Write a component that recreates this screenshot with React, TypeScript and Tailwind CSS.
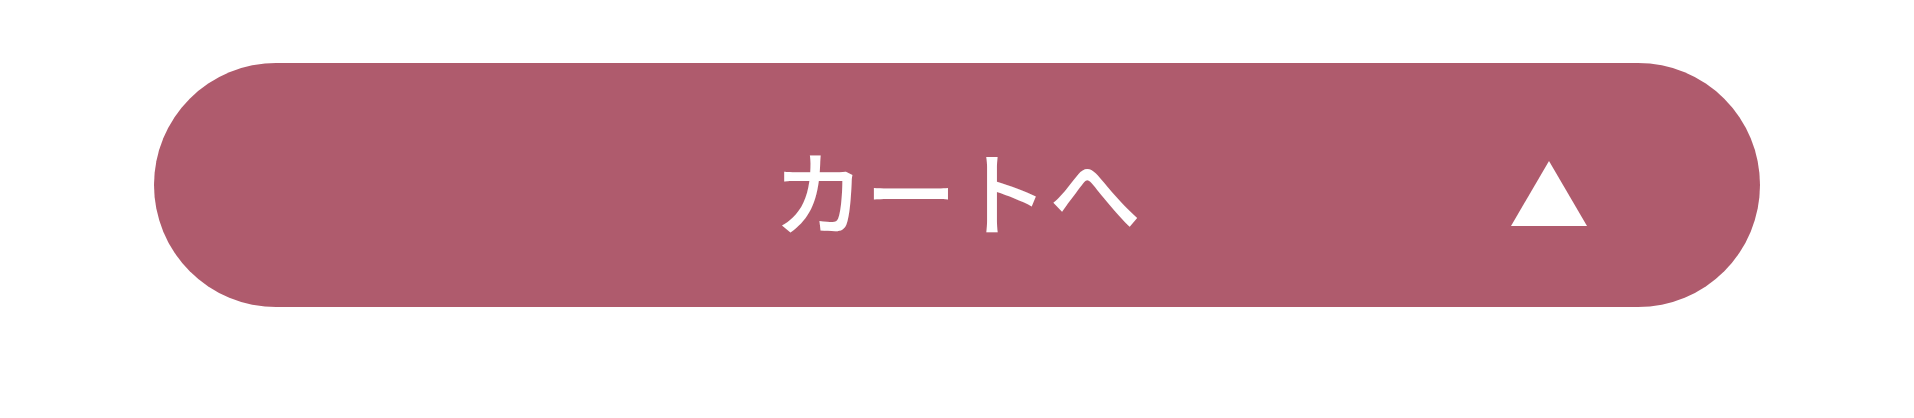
const CartButton = () => {
  return (
    <button
      type="button"
      className="relative flex h-[244px] w-[1606px] items-center justify-center rounded-full bg-[#af5b6d] text-white"
    >
      <span
        className="mt-[8px] text-[92px] font-medium leading-none"
        style={{ fontFamily: '"Noto Sans CJK JP", "Noto Sans", sans-serif' }}
      >
        カートへ
      </span>
      <svg
        className="absolute right-[173px] top-[98px]"
        width="76"
        height="65"
        viewBox="0 0 76 65"
        aria-hidden="true"
      >
        <polygon points="38,0 76,65 0,65" fill="#ffffff" />
      </svg>
    </button>
  );
};

export default function App() {
  return (
    <div className="flex h-[418px] w-full items-start justify-center bg-white pt-[63px]">
      <CartButton />
    </div>
  );
}
